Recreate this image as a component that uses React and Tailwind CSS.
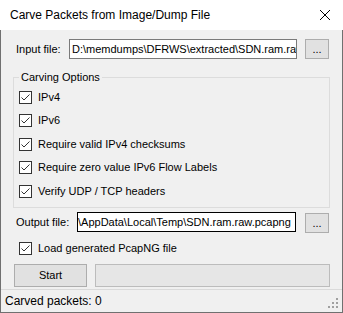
import { X } from "lucide-react";

const font = { fontFamily: '"Liberation Sans", Arial, sans-serif' };

// --- small checkbox like the WinForms one ---
function Check({ label }) {
  return (
    <div className="flex items-center h-[23.5px]">
      <span className="w-[13px] h-[13px] border border-[#333333] bg-white flex items-center justify-center shrink-0">
        <svg width="11" height="11" viewBox="0 0 11 11">
          <path d="M1.5 5.5 L4 8 L9.5 2.5" fill="none" stroke="#333333" strokeWidth="1" />
        </svg>
      </span>
      <span className="ml-[6px] text-[11px] leading-[13px] text-black">{label}</span>
    </div>
  );
}

function BrowseButton() {
  return (
    <button className="w-[24px] h-[20px] bg-[#e1e1e1] border border-[#adadad] text-[11px] leading-[10px] text-black flex items-center justify-center">
      ...
    </button>
  );
}

export default function App() {
  return (
    <div className="w-[343px] h-[313px] flex flex-col text-black" style={font}>
      {/* Title bar */}
      <div className="h-[30px] bg-white flex items-center justify-between pl-[9px] pr-[10px] border-x border-white">
        <span className="text-[12px] leading-[14px]">Carve Packets from Image/Dump File</span>
        <svg width="12" height="12" viewBox="0 0 12 12" className="mr-[1px]">
          <path d="M1 1 L11 11 M11 1 L1 11" stroke="#000" strokeWidth="1" />
        </svg>
      </div>

      {/* Body */}
      <div className="flex-1 flex flex-col bg-[#f0f0f0] border-x border-b border-[#707070] relative">
        {/* Input file */}
        <div className="flex items-center h-[20px] mt-[9px] pl-[15px]">
          <span className="w-[53px] text-[11px] leading-[13px]">Input file:</span>
          <div className="w-[228px] h-[20px] bg-white border border-[#7a7a7a] overflow-hidden whitespace-nowrap pl-[2px] text-[11px] leading-[18px]">
            D:\memdumps\DFRWS\extracted\SDN.ram.raw
          </div>
          <div className="ml-[8px]">
            <BrowseButton />
          </div>
        </div>

        {/* Carving Options group */}
        <fieldset className="ml-[12px] mt-[12px] w-[317px] border border-[#dcdcdc] pl-[5px] pb-[4px]">
          <legend className="px-[2px] text-[11px] leading-[13px]">Carving Options</legend>
          <div className="pt-[1.5px]">
            <Check label="IPv4" />
            <Check label="IPv6" />
            <Check label="Require valid IPv4 checksums" />
            <Check label="Require zero value IPv6 Flow Labels" />
            <Check label="Verify UDP / TCP headers" />
          </div>
        </fieldset>

        {/* Output file */}
        <div className="flex items-start h-[21px] mt-[4px] pl-[15px]">
          <span className="w-[61px] text-[11px] leading-[13px] mt-[4px]">Output file:</span>
          <div className="w-[219px] h-[20px] bg-white border border-black overflow-hidden whitespace-nowrap text-[11px] leading-[18px]">
            \AppData\Local\Temp\SDN.ram.raw.pcapng
          </div>
          <div className="ml-[9px] mt-[1px]">
            <BrowseButton />
          </div>
        </div>

        {/* Load checkbox */}
        <div className="mt-[3px] pl-[18px] h-[24px] flex items-center">
          <Check label="Load generated PcapNG file" />
        </div>

        {/* Start + progress */}
        <div className="flex h-[23px] mt-[4px] pl-[13px]">
          <button className="w-[73px] h-[23px] bg-[#e1e1e1] border border-[#adadad] text-[11px] leading-[13px]">
            Start
          </button>
          <div className="ml-[8px] w-[235px] h-[23px] bg-[#e6e6e6] border border-[#bcbcbc]" />
        </div>

        {/* Status strip */}
        <div className="mt-[2px] flex-1 border-t border-[#dadada] flex items-center pl-[4px]">
          <span className="text-[12px] leading-[14px]">Carved packets: 0</span>
          <svg width="12" height="12" viewBox="0 0 12 12" className="absolute right-[3px] bottom-[3px]">
            <rect x="9" y="1" width="2" height="2" fill="#a0a0a0" />
            <rect x="5" y="5" width="2" height="2" fill="#a0a0a0" />
            <rect x="9" y="5" width="2" height="2" fill="#a0a0a0" />
            <rect x="1" y="9" width="2" height="2" fill="#a0a0a0" />
            <rect x="5" y="9" width="2" height="2" fill="#a0a0a0" />
            <rect x="9" y="9" width="2" height="2" fill="#a0a0a0" />
          </svg>
        </div>
      </div>
    </div>
  );
}
